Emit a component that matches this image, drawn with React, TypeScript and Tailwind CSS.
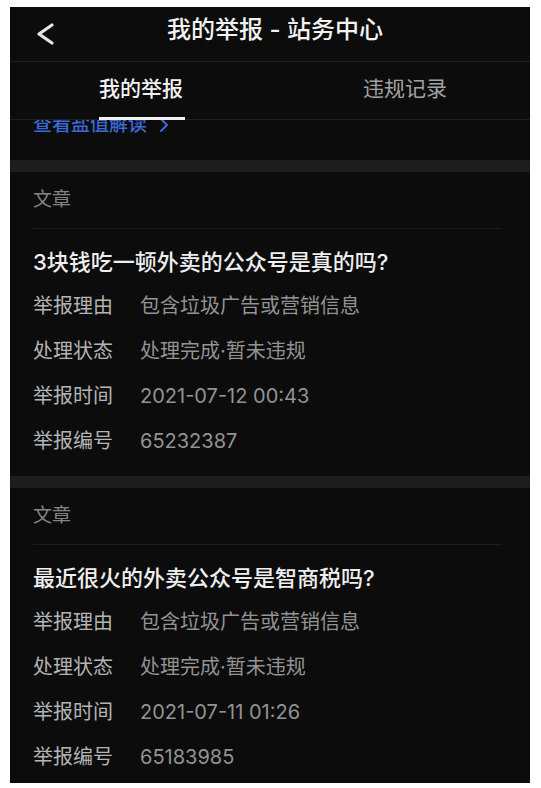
type Report = {
  title: string;
  reason: string;
  status: string;
  time: string;
  id: string;
};

const reports: Report[] = [
  {
    title: "3块钱吃一顿外卖的公众号是真的吗?",
    reason: "包含垃圾广告或营销信息",
    status: "处理完成·暂未违规",
    time: "2021-07-12 00:43",
    id: "65232387",
  },
  {
    title: "最近很火的外卖公众号是智商税吗?",
    reason: "包含垃圾广告或营销信息",
    status: "处理完成·暂未违规",
    time: "2021-07-11 01:26",
    id: "65183985",
  },
];

const font = "font-['Inter','Noto_Sans_CJK_SC',sans-serif]";

function Row({ label, value }: { label: string; value: string }) {
  return (
    <div className="h-[45px] flex items-center text-[20px] leading-[28px]">
      <span className="w-[107px] text-[#b4b4b4]">{label}</span>
      <span className="text-[#939393]">{value}</span>
    </div>
  );
}

function ReportCard({ report }: { report: Report }) {
  return (
    <div>
      <div className="h-[12px] bg-[#1d1d1d]" />
      <div className="pl-[23px] pr-[28px] pb-[13px]">
        <div className="h-[56px] flex items-center text-[19px] text-[#858585]">文章</div>
        <div className="h-px bg-[#1c1c1c]" />
        <div className="pt-[17px] mb-[5px] text-[22px] leading-[32px] font-medium text-[#efefef]">
          {report.title}
        </div>
        <Row label="举报理由" value={report.reason} />
        <Row label="处理状态" value={report.status} />
        <Row label="举报时间" value={report.time} />
        <Row label="举报编号" value={report.id} />
      </div>
    </div>
  );
}

export default function App() {
  return (
    <div className={`w-[541px] h-[788px] bg-white pt-[7px] pl-[10px] ${font}`}>
      <div className="w-[520px] h-[776px] bg-[#0c0c0c] overflow-hidden flex flex-col">
        <header className="h-[55px] shrink-0 grid grid-cols-[1fr_auto_1fr] items-center border-b border-[#1f1f1f] pl-[10px]">
          <div className="flex items-center pl-[16px]">
            <svg width="20" height="24" viewBox="0 0 20 24" className="mb-[1px]">
              <path d="M16 3L3 12l13 9" fill="none" stroke="#e6e6e6" strokeWidth="3.2" strokeLinecap="round" strokeLinejoin="round" />
            </svg>
          </div>
          <h1 className="text-[24px] leading-[30px] text-[#f2f2f2] font-medium pb-[8px]">我的举报 - 站务中心</h1>
          <div />
        </header>

        <nav className="h-[58px] shrink-0 flex border-b border-[#1f1f1f] pl-[4px]">
          <div className="relative flex-1 flex justify-center pt-[13px] pl-[2px]">
            <span className="text-[21px] leading-[28px] font-medium text-[#f2f2f2]">我的举报</span>
            <span className="absolute bottom-[-1px] left-1/2 -translate-x-1/2 ml-[2px] w-[86px] h-[3px] bg-[#f2f2f2]" />
          </div>
          <div className="flex-1 flex justify-center pt-[13px] pl-[14px]">
            <span className="text-[21px] leading-[28px] text-[#a2a2a2]">违规记录</span>
          </div>
        </nav>

        <div className="h-[40px] shrink-0 overflow-hidden pl-[23px]">
          <div className="mt-[-8px] flex items-center text-[19px] leading-[26px] font-medium text-[#3a6ad8]">
            <span>查看盐值解读</span>
            <svg width="10" height="16" viewBox="0 0 10 16" className="ml-[12px]">
              <path d="M2 2l6 6-6 6" fill="none" stroke="#3a6ad8" strokeWidth="2" strokeLinecap="round" strokeLinejoin="round" />
            </svg>
          </div>
        </div>

        {reports.map((r) => (
          <ReportCard key={r.id} report={r} />
        ))}
      </div>
    </div>
  );
}
